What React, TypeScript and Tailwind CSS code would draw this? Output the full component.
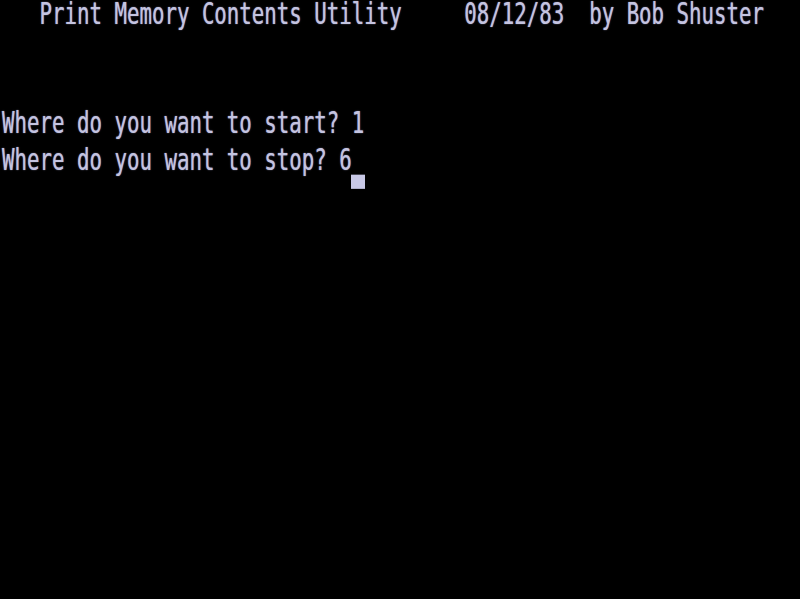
const rows = [
  "   Print Memory Contents Utility     08/12/83  by Bob Shuster",
  "",
  "",
  "Where do you want to start? 1",
  "Where do you want to stop? 6",
]

export default function App() {
  return (
    <div className="w-[800px] h-[599px] overflow-hidden bg-black">
      {/* screen — 64 cols x 16 rows, glyphs stretched tall like the old CRT */}
      <div className="pt-[0.6px] origin-top scale-y-[1.42] pl-[2px] font-['DejaVu_Sans_Mono',monospace] text-[20.76px] leading-[18px] text-[#c4c4e0] [text-shadow:0_0_1px_#9a9ac4]">
        {rows.map((row, i) => (
          <div key={i} className="relative h-[25.92px] whitespace-pre">
            {row}
            {i === 4 && (
              <span className="absolute left-[349px] top-[18.4px] h-[9.9px] w-[14px] bg-[#c8c8e6]" />
            )}
          </div>
        ))}
      </div>
    </div>
  )
}
